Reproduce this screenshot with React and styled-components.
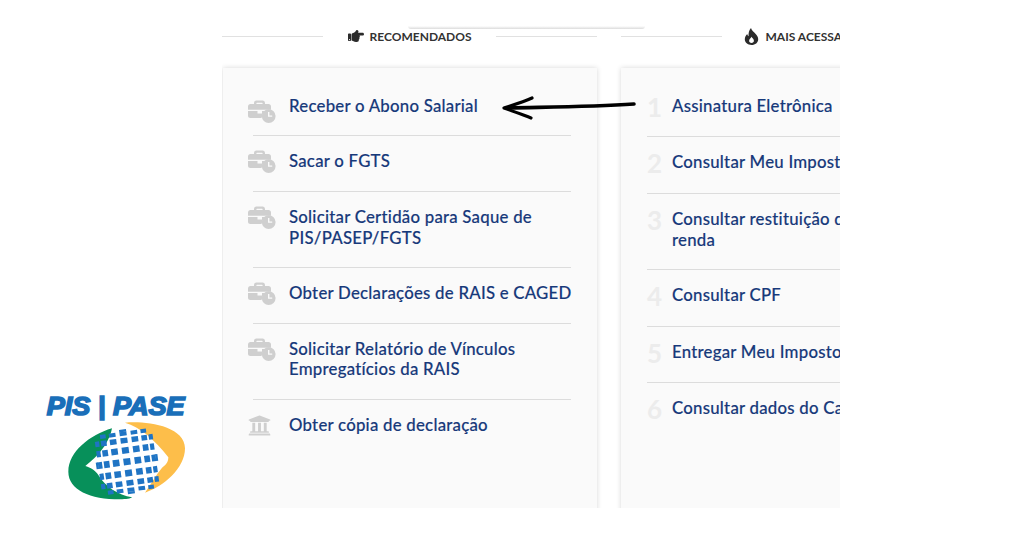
import React from 'react'
import styled, { createGlobalStyle } from 'styled-components'
import { FaHandPointRight, FaUniversity } from 'react-icons/fa'

const GlobalStyle = createGlobalStyle`
  html, body {
    margin: 0;
    padding: 0;
    background: #fff;
    font-family: "Lato", "Liberation Sans", sans-serif;
  }
`

const Page = styled.div`
  position: relative;
  width: 1024px;
  height: 536px;
  overflow: hidden;
  background: #fff;
`

const Viewport = styled.div`
  width: 618px;
  height: 508px;
  margin-left: 222px;
  padding-top: 26px;
  box-sizing: border-box;
  overflow: hidden;
`

const TopShadow = styled.div`
  width: 237px;
  height: 3px;
  margin-left: 186px;
  background: linear-gradient(#fff, #dcdcdc);
  border-radius: 0 0 3px 3px;
`

const Columns = styled.div`
  display: flex;
  gap: 23px;
  width: 780px;
`

const Column = styled.section`
  flex: 0 0 375px;
  min-width: 0;
`

const Heading = styled.div`
  display: flex;
  align-items: center;
  height: 14px;
  margin-bottom: 25px;
  margin-left: ${({ $shift }) => $shift || 0}px;
`

const HeadingRule = styled.span`
  flex: 0 0 101px;
  height: 1px;
  background: #e1e1e1;
`

const HeadingLabel = styled.h2`
  display: flex;
  flex: 1;
  align-items: center;
  justify-content: center;
  gap: ${({ $gap }) => $gap || 6}px;
  margin: 0;
  padding-right: ${({ $nudge }) => $nudge || 0}px;
  font-size: 12px;
  font-weight: 700;
  color: #333;
  white-space: nowrap;
`

const Card = styled.div`
  height: 450px;
  margin-left: 1px;
  padding-top: 12.6px;
  box-sizing: border-box;
  background: #fafafa;
  box-shadow: 0 0 5px rgba(0, 0, 0, 0.16);
`

const Row = styled.div`
  display: flex;
  min-height: ${({ $tall }) => ($tall ? '56.6px' : '0')};
  margin: 0 26px 0 ${({ $inset }) => $inset}px;
  padding: 15px 0 18.6px;
  border-bottom: 1px solid #dcdcdc;
  box-sizing: border-box;

  &:last-child {
    border-bottom: 0;
  }
`

const IconSlot = styled.span`
  display: flex;
  flex: 0 0 41px;
  align-items: center;
  height: 21px;
  margin: ${({ $low }) => ($low ? '5px 0 -5px -5px' : '0 0 0 -5px')};
  color: #cfcfcf;
`

const Rank = styled.span`
  flex: 0 0 25px;
  font-size: 26px;
  font-weight: 700;
  line-height: 22px;
  color: #ececec;
`

const RowText = styled.a`
  font-size: 16.8px;
  font-weight: 500;
  line-height: 20.8px;
  letter-spacing: 0.24px;
  white-space: nowrap;
  color: #17397a;
  -webkit-text-stroke: 0.15px #17397a;
`

const Overlay = styled.svg`
  position: absolute;
  left: ${({ $x }) => $x}px;
  top: ${({ $y }) => $y}px;
`

const BriefcaseClock = () => (
  <svg width="29" height="23" viewBox="0 0 29 23" fill="currentColor" style={{ flex: 'none' }}>
    <path d="M6 3.200C6 1.300 7 .4 8.400.4h6.200C16 .4 17 1.300 17 3.200V4h-2.400V3.400c0-.4-.2-.6-.6-.6H9c-.4 0-.6.2-.6.6V4H6z" />
    <path d="M2.400 4h18.200C21.900 4 23 5 23 6.300V9.800H0V6.300C0 5 1.100 4 2.400 4z" />
    <path d="M0 11h9.500v2.400h4.500V11h4.600C15.700 12.200 13.900 14.700 13.600 18H2.400C1.100 18 0 17 0 15.700z" />
    <path fillRule="evenodd" d="M20.700 9.200a6.900 6.900 0 1 1 0 13.800 6.900 6.900 0 0 1 0-13.800zM20 12v4.700h4.200v-1.300h-2.800V12z" />
  </svg>
)

const Flame = () => (
  <svg width="15" height="17" viewBox="0 0 15 17" fill="#2b2b2b">
    <path fillRule="evenodd" d="M7 0c.6 2.700 3 4 4.700 6 1.500 1.700 2.500 3.300 2.500 5.200 0 3.300-2.900 5.800-6.700 5.800S.8 14.500.8 11.300C.8 9 2 7.400 3.300 6c.1 1 .5 1.800 1.300 2.200C4.300 5.200 5 2.200 7 0zM7.600 8.800c-.3 1.200-2.500 2-2.500 3.900 0 1.300 1 2.200 2.400 2.200s2.400-.9 2.400-2.200c0-1.700-1.800-2.600-2.300-3.900z" />
  </svg>
)

// blue squares of the globe, shrinking towards the rim
const globeSquares = () => {
  const squares = []
  for (let i = -4; i <= 4; i++) {
    for (let j = -4; j <= 4; j++) {
      const u = i / 4.2
      const v = j / 4.2
      if (u * u + v * v > 0.93) continue
      const x = 291 + 90 * Math.sin((u * Math.PI) / 2)
      const y = 245 + 94 * Math.sin((v * Math.PI) / 2)
      const w = 6 + 15 * Math.cos((u * Math.PI) / 2)
      const h = 6 + 14 * Math.cos((v * Math.PI) / 2)
      squares.push({ x: x - w / 2, y: y - h / 2, w, h, key: `${i}-${j}` })
    }
  }
  return squares
}

const PisPaseLogo = () => (
  <Overlay $x={30} $y={380} width="170" height="130" viewBox="0 0 510 390">
    <text
      x="50"
      y="104"
      fontFamily="'Liberation Sans', sans-serif"
      fontSize="78"
      fontStyle="italic"
      fontWeight="700"
      fill="#1a6fb9"
      stroke="#1a6fb9"
      strokeWidth="5"
      textLength="414"
      lengthAdjust="spacingAndGlyphs"
    >
      PIS | PASE
    </text>
    <path
      fill="#07905a"
      d="M246 145C180 165 115 215 115 275C115 330 180 358 270 358C288 358 303 356 306 352C265 345 225 320 205 285C196 270 178 262 166 258C190 240 235 200 246 145Z"
    />
    <path
      fill="#fdbe4a"
      d="M285 128C340 122 465 135 465 205C465 265 400 320 345 338C365 310 378 285 395 265C405 255 415 250 415 232C375 180 330 140 285 128Z"
    />
    <g fill="#1f74c4" transform="rotate(-8 291 245)">
      {globeSquares().map(s => (
        <rect key={s.key} x={s.x} y={s.y} width={s.w} height={s.h} />
      ))}
    </g>
  </Overlay>
)

const HandArrow = () => (
  <Overlay $x={495} $y={90} width="150" height="36" viewBox="0 0 150 36" fill="none" stroke="#000" strokeLinecap="round">
    <path d="M11 18C50 17 95 17 139 14" strokeWidth="3.6" />
    <path d="M37 8C28 12 18 15 9 18C18 21 28 25 36 28" strokeWidth="3.2" strokeLinejoin="round" />
  </Overlay>
)

const recommended = [
  { text: ['Receber o Abono Salarial'], low: true },
  { text: ['Sacar o FGTS'] },
  { text: ['Solicitar Certidão para Saque de', 'PIS/PASEP/FGTS'] },
  { text: ['Obter Declarações de RAIS e CAGED'] },
  { text: ['Solicitar Relatório de Vínculos', 'Empregatícios da RAIS'] },
  { text: ['Obter cópia de declaração'], bank: true }
]

const mostAccessed = [
  ['Assinatura Eletrônica'],
  ['Consultar Meu Imposto de Renda'],
  ['Consultar restituição do imposto de', 'renda'],
  ['Consultar CPF'],
  ['Entregar Meu Imposto de Renda'],
  ['Consultar dados do Cadastro']
]

const Lines = ({ lines }) => (
  <RowText>
    {lines.map((line, i) => (
      <React.Fragment key={line}>
        {i > 0 && <br />}
        {line}
      </React.Fragment>
    ))}
  </RowText>
)

export default function App() {
  return (
    <Page>
      <GlobalStyle />
      <Viewport>
        <TopShadow />
        <Columns>
          <Column>
            <Heading>
              <HeadingRule />
              <HeadingLabel>
                <FaHandPointRight size={16} color="#2b2b2b" />
                RECOMENDADOS
              </HeadingLabel>
              <HeadingRule />
            </Heading>
            <Card>
              {recommended.map(item => (
                <Row key={item.text[0]} $inset={30}>
                  <IconSlot $low={item.low}>{item.bank ? <FaUniversity size={23} /> : <BriefcaseClock />}</IconSlot>
                  <Lines lines={item.text} />
                </Row>
              ))}
            </Card>
          </Column>
          <Column>
            <Heading $shift={1}>
              <HeadingRule />
              <HeadingLabel $nudge={5} $gap={7}>
                <Flame />
                MAIS ACESSADOS
              </HeadingLabel>
              <HeadingRule />
            </Heading>
            <Card>
              {mostAccessed.map((lines, i) => (
                <Row key={lines[0]} $inset={26} $tall>
                  <Rank>{i + 1}</Rank>
                  <Lines lines={lines} />
                </Row>
              ))}
            </Card>
          </Column>
        </Columns>
      </Viewport>
      <HandArrow />
      <PisPaseLogo />
    </Page>
  )
}
